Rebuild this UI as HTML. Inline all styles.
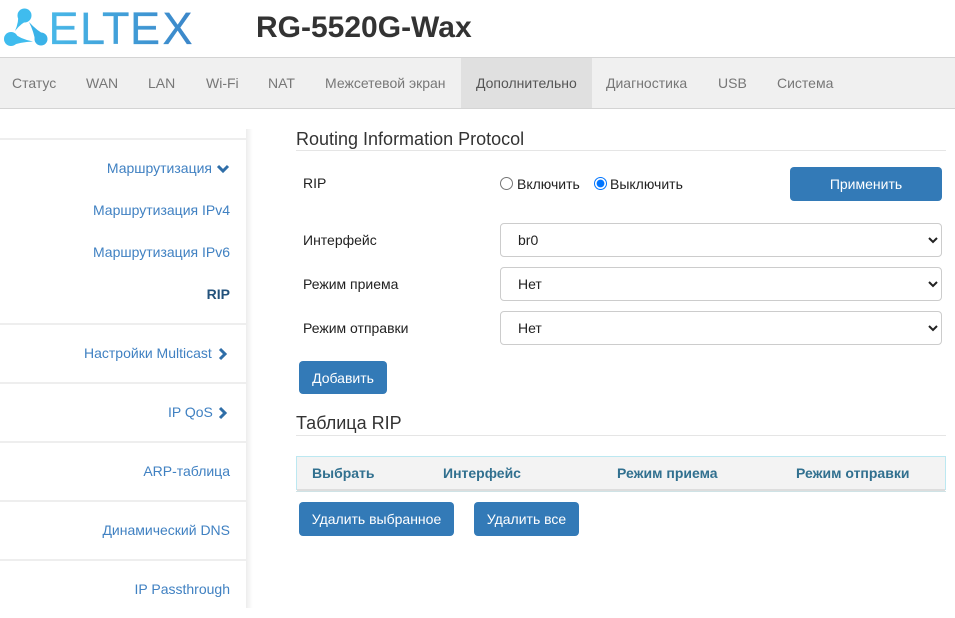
<!DOCTYPE html>
<html lang="ru"><head><meta charset="utf-8"><title>RG-5520G-Wax</title>
<style>
html,body{margin:0;padding:0;background:#fff}
body{width:955px;height:618px;position:relative;overflow:hidden;font:14px/20px "Liberation Sans","Noto Sans CJK SC",sans-serif;color:#333}
.a{position:absolute;white-space:nowrap}
#nav{left:0;top:57px;width:955px;height:50px;background:#f0f0f0;border-top:1px solid #d4d4d4;border-bottom:1px solid #d4d4d4}
.n{position:absolute;top:15px;color:#777;white-space:nowrap}
#active{position:absolute;left:461px;top:0;width:131px;height:50px;background:#e0e0e0}
#shadow{left:246px;top:129px;width:7px;height:479px;background:linear-gradient(to right,rgba(0,0,0,.07),rgba(0,0,0,0))}
.l{position:absolute;left:0;width:246px;height:2px;background:#eeeeee}
.s{position:absolute;right:725px;color:#4081c2;white-space:nowrap}
h3{position:absolute;margin:0;font-weight:400;font-size:18px;line-height:20px;left:296px;color:#333}
.r{position:absolute;left:296px;height:1px;width:650px;background:#e5e5e5}
.b{position:absolute;background:#337ab7;color:#fff;border-radius:4px;height:34px;line-height:34px;text-align:center;border:0;padding:0;font:14px/34px "Liberation Sans",sans-serif}
select{position:absolute;left:500px;width:442px;height:34px;border:1px solid #ccc;border-radius:4px;background:#fff;color:#222;font:14px "Liberation Sans",sans-serif;padding:0 13px;box-sizing:border-box}
.t{position:absolute;left:303px;color:#222}
.th{position:absolute;top:463px;font-weight:700;color:#31708f;white-space:nowrap}
input[type=radio]{position:absolute;margin:0;width:13px;height:13px}
</style></head><body>
<svg class="a" style="left:0;top:0" width="240" height="57" viewBox="0 0 240 57">
<defs><linearGradient id="g2" gradientUnits="userSpaceOnUse" x1="50" x2="195" y1="0" y2="0"><stop offset="0" stop-color="#48b8e8"/><stop offset="1" stop-color="#3b85c8"/></linearGradient></defs>
<g fill="#3fbcee">
<circle cx="24.5" cy="15.5" r="7"/><path d="M30.7 18.8 Q21 23 15 31 Q19 22 18.3 12.2Z"/>
<circle cx="11" cy="39" r="7"/><path d="M10.3 46 Q20 42 33 41.5 Q20 39 11.7 32Z"/>
<circle cx="41" cy="39" r="6.5" fill="#3ab2e8"/><path d="M46.5 35.6 Q37 31 29 22 Q34 32 35.5 42.4Z" fill="#3ab2e8"/>
</g>
<text x="48.5 80 102 130 162.5" y="44" font-family="Liberation Sans" font-size="45" fill="url(#g2)" stroke="url(#g2)" stroke-width=".3" stroke-linejoin="round">ELTEX</text>
</svg>
<div class="a" style="left:256px;top:11px;font-size:30px;line-height:34px;font-weight:700;color:#333">RG-5520G-Wax</div>
<div class="a" id="nav"><div id="active"></div>
<span class="n" style="left:12px">Статус</span><span class="n" style="left:86px">WAN</span><span class="n" style="left:148px">LAN</span><span class="n" style="left:206px">Wi-Fi</span><span class="n" style="left:268px">NAT</span><span class="n" style="left:325px">Межсетевой экран</span><span class="n" style="left:476px;color:#555">Дополнительно</span><span class="n" style="left:606px">Диагностика</span><span class="n" style="left:718px">USB</span><span class="n" style="left:777px">Система</span></div>
<div class="a" id="shadow"></div>
<div class="l" style="top:138px"></div><div class="l" style="top:323px"></div><div class="l" style="top:382px"></div><div class="l" style="top:441px"></div><div class="l" style="top:500px"></div><div class="l" style="top:559px"></div>
<span class="s" style="top:158px;right:743px">Маршрутизация</span>
<svg class="a" style="left:216px;top:163px" width="14" height="12"><path d="M2 3 L7 8 L12 3" fill="none" stroke="#2f6ea8" stroke-width="3"/></svg>
<span class="s" style="top:200px">Маршрутизация IPv4</span>
<span class="s" style="top:242px">Маршрутизация IPv6</span>
<span class="s" style="top:284px;color:#23527c;font-weight:700">RIP</span>
<span class="s" style="top:343px;right:auto;left:84px">Настройки Multicast</span>
<svg class="a" style="left:217px;top:347px" width="12" height="14"><path d="M3 2 L8 7 L3 12" fill="none" stroke="#2f6ea8" stroke-width="3"/></svg>
<span class="s" style="top:402px;right:auto;left:168px">IP QoS</span>
<svg class="a" style="left:217px;top:406px" width="12" height="14"><path d="M3 2 L8 7 L3 12" fill="none" stroke="#2f6ea8" stroke-width="3"/></svg>
<span class="s" style="top:461px">ARP-таблица</span>
<span class="s" style="top:520px">Динамический DNS</span>
<span class="s" style="top:579px">IP Passthrough</span>
<h3 style="top:129px">Routing Information Protocol</h3><div class="r" style="top:150px"></div>
<span class="t" style="top:173px">RIP</span>
<input type="radio" name="rip" style="left:500px;top:177px"><span class="a" style="left:517px;top:174px;color:#222">Включить</span>
<input type="radio" name="rip" checked style="left:594px;top:177px"><span class="a" style="left:610px;top:174px;color:#222">Выключить</span>
<button class="b" style="left:790px;top:167px;width:152px">Применить</button>
<span class="t" style="top:230px">Интерфейс</span><select style="top:223px"><option>br0</option></select>
<span class="t" style="top:274px">Режим приема</span><select style="top:267px"><option>Нет</option></select>
<span class="t" style="top:318px">Режим отправки</span><select style="top:311px"><option>Нет</option></select>
<button class="b" style="left:299px;top:361px;width:88px;height:33px">Добавить</button>
<h3 style="top:413px">Таблица RIP</h3><div class="r" style="top:435px"></div>
<div class="a" style="left:296px;top:456px;width:648px;height:33px;background:#f3f3f3;border:1px solid #bce8f1;border-bottom:0"></div>
<div class="a" style="left:297px;top:489px;width:648px;height:2px;background:#ddd"></div>
<div class="a" style="left:296px;top:491px;width:650px;height:1px;background:#cfe3e6"></div>
<span class="th" style="left:312px">Выбрать</span><span class="th" style="left:443px">Интерфейс</span><span class="th" style="left:617px">Режим приема</span><span class="th" style="left:796px">Режим отправки</span>
<button class="b" style="left:299px;top:502px;width:155px">Удалить выбранное</button>
<button class="b" style="left:474px;top:502px;width:105px">Удалить все</button>
</body></html>
